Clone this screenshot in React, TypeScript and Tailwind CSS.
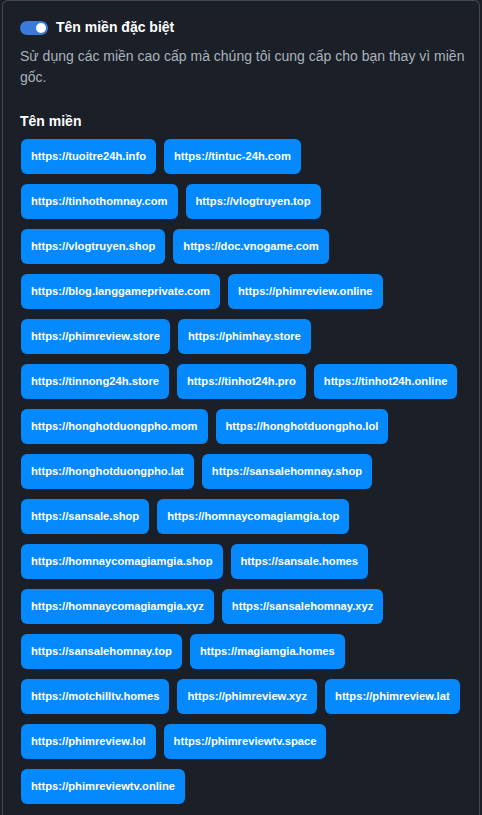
const domains = [
  'https://tuoitre24h.info',
  'https://tintuc-24h.com',
  'https://tinhothomnay.com',
  'https://vlogtruyen.top',
  'https://vlogtruyen.shop',
  'https://doc.vnogame.com',
  'https://blog.langgameprivate.com',
  'https://phimreview.online',
  'https://phimreview.store',
  'https://phimhay.store',
  'https://tinnong24h.store',
  'https://tinhot24h.pro',
  'https://tinhot24h.online',
  'https://honghotduongpho.mom',
  'https://honghotduongpho.lol',
  'https://honghotduongpho.lat',
  'https://sansalehomnay.shop',
  'https://sansale.shop',
  'https://homnaycomagiamgia.top',
  'https://homnaycomagiamgia.shop',
  'https://sansale.homes',
  'https://homnaycomagiamgia.xyz',
  'https://sansalehomnay.xyz',
  'https://sansalehomnay.top',
  'https://magiamgia.homes',
  'https://motchilltv.homes',
  'https://phimreview.xyz',
  'https://phimreview.lat',
  'https://phimreview.lol',
  'https://phimreviewtv.space',
  'https://phimreviewtv.online',
];

export default function App() {
  return (
    <div className="min-h-[815px] bg-[#1b2028] px-[2px] font-['Liberation_Sans',Arial,sans-serif]">
      <div className="min-h-[815px] rounded-t-md border border-b-0 border-[#424953] pl-[17px] pr-[10px] pt-[16px]">
        {/* toggle + title */}
        <div className="flex items-center gap-2">
          <div className="relative h-[14px] w-[28px] rounded-full bg-[#3a7bd9]">
            <div className="absolute right-[2px] top-[2px] h-[10px] w-[10px] rounded-full bg-white" />
          </div>
          <span className="text-[14px] font-bold text-white">Tên miền đặc biệt</span>
        </div>
        <p className="mt-[8px] text-[14px] leading-[21px] text-[#aab2bd]">
          Sử dụng các miền cao cấp mà chúng tôi cung cấp cho bạn thay vì miền gốc.
        </p>

        <h3 className="mt-[23px] text-[14px] font-bold text-white">Tên miền</h3>
        <div className="mt-[7px] flex flex-wrap gap-x-[8px] gap-y-[10px] pl-[1px] pr-[7px]">
          {domains.map((d) => (
            <div
              key={d}
              className="flex h-[35px] items-center rounded-md bg-[#0589ff] px-[10px] text-[11.2px] font-bold text-white"
            >
              {d}
            </div>
          ))}
        </div>
      </div>
    </div>
  );
}
